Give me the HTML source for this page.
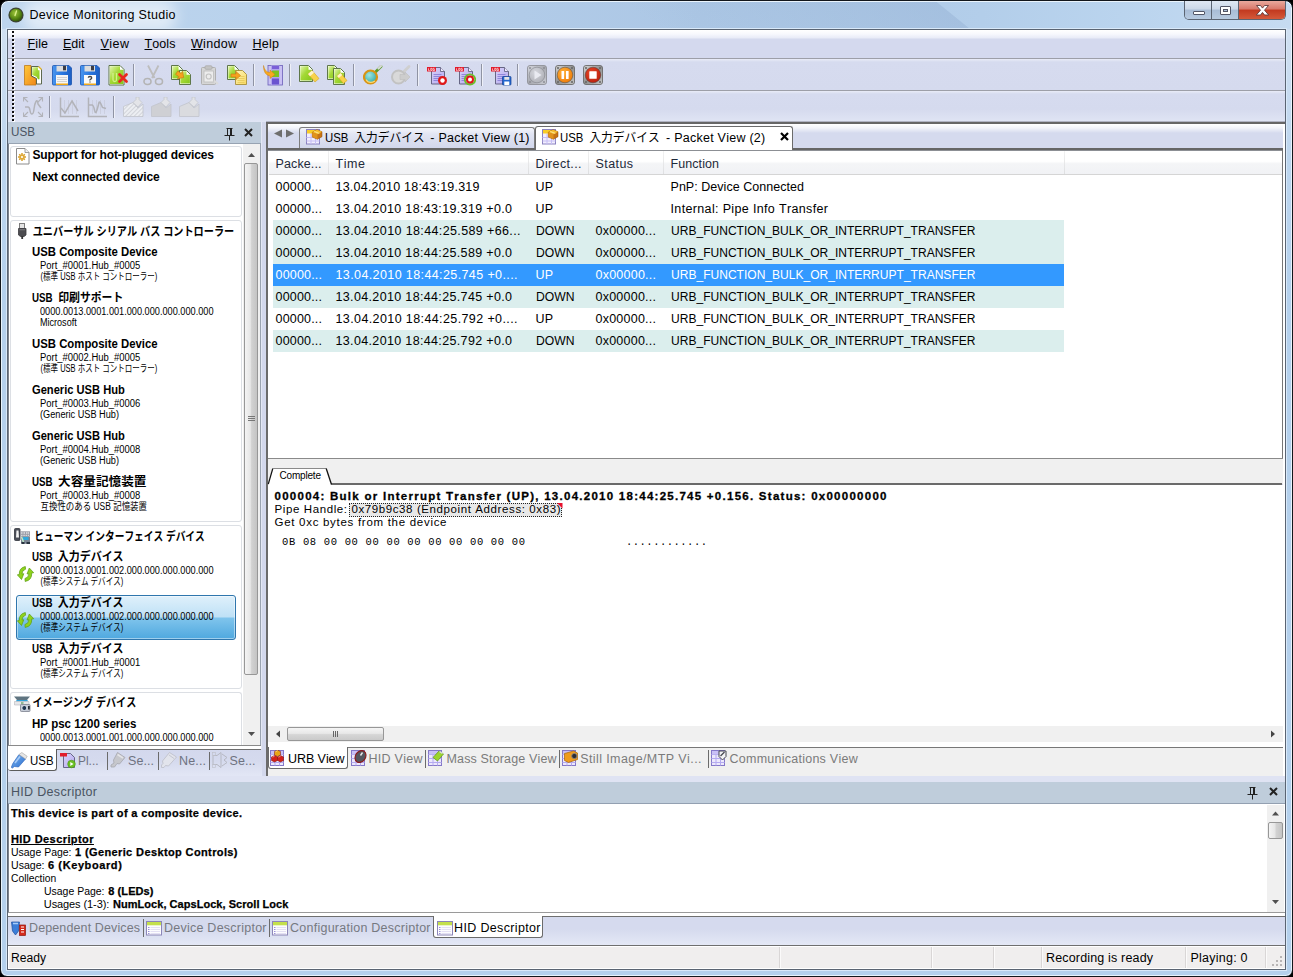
<!DOCTYPE html>
<html><head><meta charset="utf-8"><title>Device Monitoring Studio</title>
<style>
html,body{margin:0;padding:0;}
body{width:1293px;height:977px;position:relative;overflow:hidden;background:#000;font-family:"Liberation Sans",sans-serif;font-kerning:none;}
body div,body span.t,body svg{position:absolute;}
span.t{white-space:pre;}
svg text{font-family:"Liberation Sans","Noto Sans CJK JP",sans-serif;}
#win{left:0;top:0;width:1293px;height:977px;box-sizing:border-box;border:1px solid #12161b;border-radius:8px 8px 7px 7px;background:linear-gradient(#d2e1f2 0px,#cfdff1 40px,#bcd5ee 160px,#b4d0ec 300px,#b4d0ec 100%);box-shadow:inset 0 0 0 1px rgba(236,246,253,.9);}
#glass{left:2px;top:2px;width:1289px;height:27px;border-radius:6px 6px 0 0;overflow:hidden;background:linear-gradient(90deg,#bdd5ee 0px,#b9d2ec 260px,#b1cbe8 520px,#acc7e5 700px,#b3ceea 980px,#bad4ee 1120px,#c6dbf1 1289px);}
#stripe{left:640px;top:-6px;width:312px;height:40px;transform:skewX(51deg);background:linear-gradient(90deg,rgba(150,178,212,0) 0%,rgba(150,178,212,.28) 55%,rgba(146,174,210,.42) 100%);}
#glow{left:34px;top:9px;width:128px;height:10px;border-radius:8px;background:rgba(255,255,255,.55);box-shadow:0 0 14px 12px rgba(255,255,255,.55);}
#capbtn{left:1184px;top:1px;width:102px;height:19px;border:1px solid #5b6472;border-top:none;border-radius:0 0 5px 5px;box-sizing:border-box;overflow:hidden;}
.cb{top:0;height:18px;background:linear-gradient(#dfe8f3 0%,#cbd8e8 45%,#a9bdd6 50%,#b7cae0 100%);border-right:1px solid #5b6472;box-sizing:border-box;}
.cb.cx{background:linear-gradient(#e9a99d 0%,#d8786a 45%,#c2391f 50%,#d4593a 100%);border-right:none;}
</style></head>
<body>
<div id="win"></div>
<div id="glass"><div id="stripe"></div><div id="glow"></div></div>
<div style="left:6px;top:28px;width:1281px;height:943px;border:1px solid #d9e9f9;box-sizing:border-box;"></div>
<div style="left:7px;top:29px;width:1279px;height:941px;border:1px solid #5a6472;box-sizing:border-box;background:#d5daee;"></div>
<svg style="left:8px;top:7px;" width="16" height="16" viewBox="0 0 16 16"><defs><radialGradient id="ig" cx="0.4" cy="0.35" r="0.7"><stop offset="0" stop-color="#9bc23a"/><stop offset="0.6" stop-color="#5a8a14"/><stop offset="1" stop-color="#2f5208"/></radialGradient></defs><circle cx="8" cy="8" r="7.6" fill="#3d4436"/><circle cx="8" cy="8" r="6.3" fill="url(#ig)"/><path d="M8.5 4 L7 8.5" stroke="#d9ef8a" stroke-width="1.4" stroke-linecap="round"/></svg>
<span class="t" style="left:29.5px;top:6.67px;font-size:12.5px;line-height:16px;color:#000;letter-spacing:0.306px;">Device Monitoring Studio</span>
<div id="capbtn"><div class="cb" style="left:0;width:27px"></div><div class="cb" style="left:27px;width:27px"></div><div class="cb cx" style="left:54px;width:47px"></div></div>
<svg style="left:1184px;top:1px;" width="102" height="19" viewBox="0 0 102 19"><rect x="9.5" y="10.5" width="11" height="3" rx="0.5" fill="#fff" stroke="#535666" stroke-width="1"/><rect x="36.500" y="5.5" width="10" height="8" rx="0.5" fill="#fff" stroke="#535666" stroke-width="1"/><rect x="39.5" y="8.5" width="4" height="2" fill="#a9bdd6" stroke="#535666" stroke-width="1"/><path d="M72.500 4.500h4l2 2.600l2-2.600h4l-4 4.700l4.200 4.800h-4.200l-2-2.600l-2 2.600h-4.200l4.200-4.800z" fill="#fff" stroke="#5d3a3a" stroke-width="0.9"/></svg>
<div style="left:8px;top:30px;width:1277px;height:28px;background:linear-gradient(#fff 0px,#f7f8fd 4px,#e8ebf7 8px,#d4d9ee 9px,#d4d9ee 100%);"></div>
<div style="left:8px;top:58px;width:1277px;height:1px;background:#9d9fa8;"></div>
<div style="left:8px;top:59px;width:1277px;height:31px;background:linear-gradient(#e9ecf7 0px,#d6dbef 3px,#d5daee 100%);"></div>
<div style="left:8px;top:90px;width:1277px;height:1px;background:#9d9fa8;"></div>
<div style="left:8px;top:91px;width:1277px;height:31px;background:linear-gradient(#e9ecf7 0px,#d6dbef 3px,#d5daee 18px,#e0e5f4 100%);"></div>
<svg style="left:12px;top:31px;" width="3" height="91" viewBox="0 0 3 91"><rect x="1" y="1" width="2" height="2" fill="#fff"/><rect x="0" y="0" width="2" height="2" fill="#111"/><rect x="1" y="5" width="2" height="2" fill="#fff"/><rect x="0" y="4" width="2" height="2" fill="#111"/><rect x="1" y="9" width="2" height="2" fill="#fff"/><rect x="0" y="8" width="2" height="2" fill="#111"/><rect x="1" y="13" width="2" height="2" fill="#fff"/><rect x="0" y="12" width="2" height="2" fill="#111"/><rect x="1" y="17" width="2" height="2" fill="#fff"/><rect x="0" y="16" width="2" height="2" fill="#111"/><rect x="1" y="21" width="2" height="2" fill="#fff"/><rect x="0" y="20" width="2" height="2" fill="#111"/><rect x="1" y="25" width="2" height="2" fill="#fff"/><rect x="0" y="24" width="2" height="2" fill="#111"/><rect x="1" y="29" width="2" height="2" fill="#fff"/><rect x="0" y="28" width="2" height="2" fill="#111"/><rect x="1" y="33" width="2" height="2" fill="#fff"/><rect x="0" y="32" width="2" height="2" fill="#111"/><rect x="1" y="37" width="2" height="2" fill="#fff"/><rect x="0" y="36" width="2" height="2" fill="#111"/><rect x="1" y="41" width="2" height="2" fill="#fff"/><rect x="0" y="40" width="2" height="2" fill="#111"/><rect x="1" y="45" width="2" height="2" fill="#fff"/><rect x="0" y="44" width="2" height="2" fill="#111"/><rect x="1" y="49" width="2" height="2" fill="#fff"/><rect x="0" y="48" width="2" height="2" fill="#111"/><rect x="1" y="53" width="2" height="2" fill="#fff"/><rect x="0" y="52" width="2" height="2" fill="#111"/><rect x="1" y="57" width="2" height="2" fill="#fff"/><rect x="0" y="56" width="2" height="2" fill="#111"/><rect x="1" y="61" width="2" height="2" fill="#fff"/><rect x="0" y="60" width="2" height="2" fill="#111"/><rect x="1" y="65" width="2" height="2" fill="#fff"/><rect x="0" y="64" width="2" height="2" fill="#111"/><rect x="1" y="69" width="2" height="2" fill="#fff"/><rect x="0" y="68" width="2" height="2" fill="#111"/><rect x="1" y="73" width="2" height="2" fill="#fff"/><rect x="0" y="72" width="2" height="2" fill="#111"/><rect x="1" y="77" width="2" height="2" fill="#fff"/><rect x="0" y="76" width="2" height="2" fill="#111"/><rect x="1" y="81" width="2" height="2" fill="#fff"/><rect x="0" y="80" width="2" height="2" fill="#111"/><rect x="1" y="85" width="2" height="2" fill="#fff"/><rect x="0" y="84" width="2" height="2" fill="#111"/><rect x="1" y="89" width="2" height="2" fill="#fff"/><rect x="0" y="88" width="2" height="2" fill="#111"/></svg>
<span class="t" style="left:27.5px;top:35.67px;font-size:12.5px;line-height:16px;color:#000;letter-spacing:0.119px;"><u>F</u>ile</span>
<span class="t" style="left:63px;top:35.67px;font-size:12.5px;line-height:16px;color:#000;letter-spacing:-0.013px;"><u>E</u>dit</span>
<span class="t" style="left:100.5px;top:35.67px;font-size:12.5px;line-height:16px;color:#000;letter-spacing:0.469px;"><u>V</u>iew</span>
<span class="t" style="left:144.5px;top:35.67px;font-size:12.5px;line-height:16px;color:#000;letter-spacing:0.108px;"><u>T</u>ools</span>
<span class="t" style="left:191px;top:35.67px;font-size:12.5px;line-height:16px;color:#000;letter-spacing:0.308px;"><u>W</u>indow</span>
<span class="t" style="left:252.5px;top:35.67px;font-size:12.5px;line-height:16px;color:#000;letter-spacing:0.264px;"><u>H</u>elp</span>
<svg width="0" height="0" style="left:0;top:0"><defs>
<linearGradient id="gor" x1="0" y1="0" x2="1" y2="1"><stop offset="0" stop-color="#ffc93a"/><stop offset="1" stop-color="#f0861a"/></linearGradient>
<linearGradient id="ggr" x1="0" y1="0" x2="1" y2="1"><stop offset="0" stop-color="#e2f5ae"/><stop offset="0.45" stop-color="#a4d936"/><stop offset="1" stop-color="#84c61c"/></linearGradient>
<linearGradient id="gbl" x1="0" y1="0" x2="1" y2="0"><stop offset="0" stop-color="#4a95ee"/><stop offset="0.5" stop-color="#2a78e0"/><stop offset="1" stop-color="#1d5fc4"/></linearGradient>
<linearGradient id="gye" x1="0" y1="0" x2="1" y2="1"><stop offset="0" stop-color="#fff5b8"/><stop offset="1" stop-color="#f8d860"/></linearGradient>
<linearGradient id="gpu" x1="0" y1="0" x2="1" y2="1"><stop offset="0" stop-color="#d8d2fa"/><stop offset="1" stop-color="#b4a8ee"/></linearGradient>
<linearGradient id="ggy" x1="0" y1="0" x2="0" y2="1"><stop offset="0" stop-color="#e2e2e2"/><stop offset="1" stop-color="#b9b9b9"/></linearGradient>
<linearGradient id="gmt" x1="0" y1="0" x2="1" y2="1"><stop offset="0" stop-color="#d9d9d9"/><stop offset="0.5" stop-color="#8e8e8e"/><stop offset="1" stop-color="#c9c9c9"/></linearGradient>
<radialGradient id="gpl" cx="0.4" cy="0.35" r="0.7"><stop offset="0" stop-color="#d6d6d6"/><stop offset="1" stop-color="#9b9b9b"/></radialGradient>
<radialGradient id="gpa" cx="0.4" cy="0.35" r="0.7"><stop offset="0" stop-color="#ffb23a"/><stop offset="1" stop-color="#ee7a08"/></radialGradient>
<radialGradient id="gst" cx="0.4" cy="0.35" r="0.7"><stop offset="0" stop-color="#e8482a"/><stop offset="1" stop-color="#b81e0c"/></radialGradient>
<radialGradient id="ggl" cx="0.4" cy="0.35" r="0.7"><stop offset="0" stop-color="#9fe6e0"/><stop offset="1" stop-color="#2ba7a5"/></radialGradient>
<linearGradient id="gtb" x1="0" y1="0" x2="1" y2="1"><stop offset="0" stop-color="#7db4ee"/><stop offset="1" stop-color="#2a6fd0"/></linearGradient>
</defs></svg>
<svg style="left:24px;top:65px;" width="21" height="21" viewBox="0 0 21 21"><path d="M0.500 0.500h6.500v10.500l5 2.500v6.500h-11.500z" fill="url(#gor)" stroke="#c07a1a" stroke-width="0.8"/><path d="M7.500 1.500h7l3 3v14.500h-5v-5.500l-5-2.500z" fill="#fff" stroke="#4e5a3c" stroke-width="0.9"/><path d="M8.200 2.300h5.600l0.200 3h1.500v9h-1.500l-1.500-2.500l-4.300-1.800z" fill="url(#ggr)"/><path d="M14.500 1.500l3 3" stroke="#e0b020" stroke-width="1.200"/></svg>
<svg style="left:52px;top:65px;" width="21" height="21" viewBox="0 0 21 21"><path d="M0.500 1.500a1 1 0 0 1 1-1h15.500l2.500 2.500v16a1 1 0 0 1 -1 1h-17a1 1 0 0 1 -1-1z" fill="url(#gbl)" stroke="#1a54b0" stroke-width="0.8"/><rect x="4.500" y="0.800" width="10.500" height="5.700" fill="#dcdcdc"/><rect x="11" y="0.800" width="3" height="4.500" fill="#3c3c44"/><rect x="4" y="10" width="12" height="10" fill="#f6f6f6"/><path d="M5 12.500h10M5 14.500h10M5 16.500h10" stroke="#c9c9c9" stroke-width="0.8"/><rect x="4" y="18.500" width="12" height="1.500" fill="#f0a818"/></svg>
<svg style="left:80px;top:65px;" width="21" height="21" viewBox="0 0 21 21"><path d="M0.500 1.500a1 1 0 0 1 1-1h15.500l2.500 2.500v16a1 1 0 0 1 -1 1h-17a1 1 0 0 1 -1-1z" fill="url(#gbl)" stroke="#1a54b0" stroke-width="0.8"/><rect x="4.500" y="0.800" width="10.500" height="5.700" fill="#dcdcdc"/><rect x="11" y="0.800" width="3" height="4.500" fill="#3c3c44"/><rect x="4" y="10" width="12" height="10" fill="#fbfbfb"/><rect x="4" y="18.500" width="12" height="1.500" fill="#f0a818"/><path d="M8.300 12.800q0-1.300 1.700-1.300t1.700 1.300q0 0.900-1 1.400t-0.700 1.300M10 16.600v1" stroke="#444" stroke-width="1.300" fill="none"/></svg>
<svg style="left:108px;top:65px;" width="21" height="21" viewBox="0 0 21 21"><path d="M1 0.5h11l4 4v15.500h-15z" fill="#fff" stroke="#4e6a34" stroke-width="0.9"/><path d="M1.8 1.3h10.200l0 3.500h3.400v14.300h-13.500z" fill="url(#ggr)"/><path d="M5 8v7q0 1.500 1.700 1.500t1.800-1.500v-7" stroke="#d4f08a" stroke-width="1.300" fill="none"/><path d="M11.500 9.500l7 7M18.500 9.500l-7 7" stroke="#e8281e" stroke-width="2.800" stroke-linecap="round"/></svg>
<div style="left:133px;top:64px;width:1px;height:22px;background:#8f93a3;"></div>
<div style="left:134px;top:64px;width:1px;height:22px;background:#eef0f8;"></div>
<svg style="left:143px;top:65px;" width="21" height="21" viewBox="0 0 21 21"><path d="M5 0.500l6.500 12.500M15.500 0.500l-6.500 12.500" stroke="#bdbdbd" stroke-width="1.800" fill="none"/><ellipse cx="4.500" cy="16.500" rx="3.500" ry="3" fill="none" stroke="#b4b4b4" stroke-width="1.600"/><ellipse cx="16" cy="16.500" rx="3.500" ry="3" fill="none" stroke="#b4b4b4" stroke-width="1.600"/></svg>
<svg style="left:171px;top:65px;" width="21" height="21" viewBox="0 0 21 21"><path d="M0.5 0.5h7l4 4v10h-11z" fill="#fff" stroke="#4e6a34" stroke-width="0.9"/><path d="M1.3 1.3h6.200l0 3.500h3.400v8.800h-9.500z" fill="url(#ggr)"/><path d="M8.5 5.5h7l4 4v10h-11z" fill="#fff" stroke="#4e6a34" stroke-width="0.9"/><path d="M9.3 6.3h6.200l0 3.500h3.400v8.800h-9.500z" fill="url(#ggr)"/><path d="M5 8l4 0v-2.500l4.500 4.500l-4.500 4.500v-2.500h-4z" fill="#f6a21e" stroke="#c97a10" stroke-width="0.600" transform="rotate(35 9 10)"/></svg>
<svg style="left:200px;top:65px;" width="21" height="21" viewBox="0 0 21 21"><rect x="1.500" y="2.500" width="14" height="17" rx="1" fill="#d6d6d6" stroke="#b0b0b0"/><rect x="5" y="0.800" width="7" height="3.500" rx="1" fill="#c4c4c4" stroke="#ababab" stroke-width="0.800"/><rect x="4" y="6" width="9.500" height="11" fill="#ececec" stroke="#bcbcbc" stroke-width="0.8"/><circle cx="8.700" cy="11.500" r="2.500" fill="none" stroke="#c2c2c2" stroke-width="1.200"/><path d="M14 15.500l4 3.500" stroke="#dadada" stroke-width="2"/></svg>
<svg style="left:227px;top:65px;" width="21" height="21" viewBox="0 0 21 21"><path d="M0.5 0.5h7l4 4v10h-11z" fill="#fff" stroke="#4e6a34" stroke-width="0.9"/><path d="M1.3 1.3h6.200l0 3.500h3.400v8.800h-9.500z" fill="url(#ggr)"/><path d="M8.500 5.500h7l4 4v10h-11z" fill="url(#gye)" stroke="#a8903a" stroke-width="0.9"/><path d="M10.500 11.500h7M10.500 13.500h7M10.500 15.500h7M10.500 17.500h7" stroke="#e6c858" stroke-width="0.8"/><path d="M4 9h5v-2.500l4.500 4l-4.500 4v-2.500h-5z" fill="#f6a21e" stroke="#c97a10" stroke-width="0.600"/></svg>
<div style="left:253px;top:64px;width:1px;height:22px;background:#8f93a3;"></div>
<div style="left:254px;top:64px;width:1px;height:22px;background:#eef0f8;"></div>
<svg style="left:263px;top:65px;" width="21" height="21" viewBox="0 0 21 21"><rect x="5" y="0.500" width="14.500" height="19.500" fill="#c9c0f4" stroke="#6a5fb8" stroke-width="0.8"/><rect x="8" y="0.500" width="8.500" height="19.500" fill="#b0a4ec"/><rect x="9" y="1" width="7" height="3" fill="#7a5fd8"/><rect x="9" y="5.500" width="7" height="6.500" fill="#7cc322"/><rect x="9" y="13.500" width="7" height="6" fill="#6a54d0"/><path d="M0.500 0.500q1 6.500 6.500 7v-2.500l5 4.500l-5 4v-2.500q-6.500-1-6.500-10.500z" fill="#f8a820" stroke="#c98010" stroke-width="0.500"/></svg>
<div style="left:289px;top:64px;width:1px;height:22px;background:#8f93a3;"></div>
<div style="left:290px;top:64px;width:1px;height:22px;background:#eef0f8;"></div>
<svg style="left:299px;top:65px;" width="21" height="21" viewBox="0 0 21 21"><path d="M0.5 0.5h9l4 4v12h-13z" fill="#fff" stroke="#4e6a34" stroke-width="0.9"/><path d="M1.3 1.3h8.200l0 3.500h3.400v10.800h-11.500z" fill="url(#ggr)"/><path d="M9 9l4-3.500l7 8l-4 3.500z" fill="#f8d24a" stroke="#d4a420" stroke-width="0.600"/><path d="M9 9l4-3.500l2 2.300l-4 3.500z" fill="#fdf4c8"/></svg>
<svg style="left:327px;top:65px;" width="21" height="21" viewBox="0 0 21 21"><path d="M0.5 0.5h7l4 4v10h-11z" fill="#fff" stroke="#4e6a34" stroke-width="0.9"/><path d="M1.3 1.3h6.200l0 3.500h3.400v8.800h-9.500z" fill="url(#ggr)"/><path d="M6.5 3.5h7l4 4v12h-11z" fill="#fff" stroke="#4e6a34" stroke-width="0.9"/><path d="M7.3 4.3h6.200l0 3.500h3.400v10.800h-9.500z" fill="url(#ggr)"/><path d="M10 11l3.500-3l6.500 7.500l-3.500 3z" fill="#f8d24a" stroke="#d4a420" stroke-width="0.600"/><path d="M10 11l3.500-3l1.800 2l-3.500 3z" fill="#fdf4c8"/></svg>
<div style="left:353px;top:64px;width:1px;height:22px;background:#8f93a3;"></div>
<div style="left:354px;top:64px;width:1px;height:22px;background:#eef0f8;"></div>
<svg style="left:363px;top:65px;" width="21" height="21" viewBox="0 0 21 21"><path d="M12 7.500l6-6" stroke="#5a9a2a" stroke-width="2.800" stroke-linecap="round"/><path d="M15.500 3.500l2.500-2.500" stroke="#d8d8d8" stroke-width="2.200" stroke-linecap="round"/><circle cx="7.500" cy="12" r="6.500" fill="url(#ggl)" stroke="#d89414" stroke-width="2.200"/><path d="M3 14.500q3 5 9 1.500" stroke="#ffd870" stroke-width="1.200" fill="none"/></svg>
<svg style="left:391px;top:65px;" width="21" height="21" viewBox="0 0 21 21"><path d="M12 7.500l6-6" stroke="#cfcfcf" stroke-width="2.800" stroke-linecap="round"/><circle cx="7.500" cy="12" r="6.500" fill="#d9d9d9" stroke="#c2c2c2" stroke-width="2"/><path d="M9 9.500h5v-2.500l5 5l-5 5v-2.500h-5z" fill="#cdcdcd" stroke="#bdbdbd" stroke-width="0.600"/></svg>
<div style="left:417px;top:64px;width:1px;height:22px;background:#8f93a3;"></div>
<div style="left:418px;top:64px;width:1px;height:22px;background:#eef0f8;"></div>
<svg style="left:427px;top:65px;" width="21" height="21" viewBox="0 0 21 21"><path d="M4.500 2.500h9l4 4v12.500h-13z" fill="url(#gpu)" stroke="#5a5a78" stroke-width="0.9"/><path d="M13.500 2.500v4h4" fill="#efeaff" stroke="#5a5a78" stroke-width="0.8"/><path d="M6.500 9.500h8M6.500 11.500h8M6.500 13.500h6M6.500 15.500h5" stroke="#8a7fd8" stroke-width="0.9"/><rect x="0" y="2" width="9" height="4.500" fill="#e21b2c"/><path d="M1.500 3.300v2.200h1.200M3.700 3.300h1.300v2.200h-1.300zM6 3.300h1.500M6 3.300v2.200h1.600v-1h-0.800" stroke="#fff" stroke-width="0.600" fill="none"/><circle cx="15.500" cy="15.500" r="4.500" fill="#e01818"/><circle cx="15.500" cy="15.500" r="2.200" fill="#fff"/></svg>
<svg style="left:455px;top:65px;" width="21" height="21" viewBox="0 0 21 21"><path d="M4.500 2.500h9l4 4v12.500h-13z" fill="url(#gpu)" stroke="#5a5a78" stroke-width="0.9"/><path d="M13.500 2.500v4h4" fill="#efeaff" stroke="#5a5a78" stroke-width="0.8"/><path d="M6.500 9.500h8M6.500 11.500h8M6.500 13.500h6M6.500 15.500h5" stroke="#8a7fd8" stroke-width="0.9"/><rect x="0" y="2" width="9" height="4.500" fill="#e21b2c"/><path d="M1.500 3.300v2.200h1.200M3.700 3.300h1.300v2.200h-1.300zM6 3.300h1.500M6 3.300v2.200h1.600v-1h-0.800" stroke="#fff" stroke-width="0.600" fill="none"/><circle cx="15" cy="14.500" r="5.200" fill="none" stroke="#6cc02a" stroke-width="1.800"/><circle cx="15" cy="14.500" r="4" fill="#e01818"/><circle cx="15" cy="14.500" r="2" fill="#fff"/></svg>
<div style="left:481px;top:64px;width:1px;height:22px;background:#8f93a3;"></div>
<div style="left:482px;top:64px;width:1px;height:22px;background:#eef0f8;"></div>
<svg style="left:491px;top:65px;" width="21" height="21" viewBox="0 0 21 21"><path d="M4.500 2.500h9l4 4v12.500h-13z" fill="url(#gpu)" stroke="#5a5a78" stroke-width="0.9"/><path d="M13.500 2.500v4h4" fill="#efeaff" stroke="#5a5a78" stroke-width="0.8"/><path d="M6.500 9.500h8M6.500 11.500h8M6.500 13.500h6M6.500 15.500h5" stroke="#8a7fd8" stroke-width="0.9"/><rect x="0" y="2" width="9" height="4.500" fill="#e21b2c"/><path d="M1.500 3.300v2.200h1.200M3.700 3.300h1.300v2.200h-1.300zM6 3.300h1.500M6 3.300v2.200h1.600v-1h-0.800" stroke="#fff" stroke-width="0.600" fill="none"/><rect x="11.500" y="11.500" width="8.500" height="8.500" rx="0.800" fill="#2468d0" stroke="#123f92" stroke-width="0.700"/><rect x="13.300" y="12" width="5" height="2.800" fill="#e4e4e4"/><rect x="13.300" y="16.500" width="5" height="3.500" fill="#fff"/></svg>
<div style="left:517px;top:64px;width:1px;height:22px;background:#8f93a3;"></div>
<div style="left:518px;top:64px;width:1px;height:22px;background:#eef0f8;"></div>
<svg style="left:527px;top:65px;" width="21" height="21" viewBox="0 0 21 21"><g opacity="0.65"><rect x="0.500" y="0.500" width="19" height="19" rx="2.500" fill="url(#gmt)" stroke="#6a6a6a" stroke-width="0.9"/><circle cx="3" cy="3" r="1" fill="#666"/><circle cx="17" cy="3" r="1" fill="#666"/><circle cx="3" cy="17" r="1" fill="#666"/><circle cx="17" cy="17" r="1" fill="#666"/><circle cx="10" cy="10" r="7.800" fill="url(#gpl)" stroke="rgba(60,60,60,.55)" stroke-width="0.800"/><path d="M7.500 5.500l7 4.500l-7 4.500z" fill="#f4f4f4"/></g></svg>
<svg style="left:555px;top:65px;" width="21" height="21" viewBox="0 0 21 21"><rect x="0.500" y="0.500" width="19" height="19" rx="2.500" fill="url(#gmt)" stroke="#6a6a6a" stroke-width="0.9"/><circle cx="3" cy="3" r="1" fill="#666"/><circle cx="17" cy="3" r="1" fill="#666"/><circle cx="3" cy="17" r="1" fill="#666"/><circle cx="17" cy="17" r="1" fill="#666"/><circle cx="10" cy="10" r="7.800" fill="url(#gpa)" stroke="rgba(60,60,60,.55)" stroke-width="0.800"/><rect x="6.500" y="6" width="2.600" height="8" fill="#fff"/><rect x="11" y="6" width="2.600" height="8" fill="#fff"/></svg>
<svg style="left:583px;top:65px;" width="21" height="21" viewBox="0 0 21 21"><rect x="0.500" y="0.500" width="19" height="19" rx="2.500" fill="url(#gmt)" stroke="#6a6a6a" stroke-width="0.9"/><circle cx="3" cy="3" r="1" fill="#666"/><circle cx="17" cy="3" r="1" fill="#666"/><circle cx="3" cy="17" r="1" fill="#666"/><circle cx="17" cy="17" r="1" fill="#666"/><circle cx="10" cy="10" r="7.800" fill="url(#gst)" stroke="rgba(60,60,60,.55)" stroke-width="0.800"/><rect x="6.300" y="6.300" width="7.400" height="7.400" rx="0.500" fill="#fff"/></svg>
<svg style="left:23px;top:97px;" width="21" height="21" viewBox="0 0 21 21"><g fill="none" stroke="#b2b3b9" stroke-width="1.100"><path d="M0.500 4.500v-4h4M1 1l4 4M19.500 4.500v-4h-4M19 1l-4 4M0.500 15.500v4h4M1 19l4-4M19.500 15.500v4h-4M19 19l-4-4"/><path d="M2 10h3q1.500 0 2 3.500t2 3.500t2-5t2-7.500t2 2.500l3 4" stroke-width="1.500"/></g></svg>
<div style="left:49px;top:96px;width:1px;height:22px;background:#8f93a3;"></div>
<div style="left:50px;top:96px;width:1px;height:22px;background:#eef0f8;"></div>
<svg style="left:59px;top:97px;" width="21" height="21" viewBox="0 0 21 21"><g fill="none" stroke="#b2b3b9"><path d="M1.500 0.500v19h18.500" stroke-width="1.500"/><path d="M2 11l4 5l7-12l6 10" stroke-width="1.500"/><path d="M5.500 3v14M9.500 3v14M13.500 3v14M17.500 3v14" stroke-width="0.500" opacity="0.600"/></g></svg>
<svg style="left:87px;top:97px;" width="21" height="21" viewBox="0 0 21 21"><g fill="none" stroke="#b2b3b9"><path d="M1.500 0.500v19h18.500" stroke-width="1.500"/><path d="M2 8h3q1.500 0 2.500 5t2.500 0t2-7.500t3.500 5l3.500 1" stroke-width="1.500"/><path d="M5.500 3v14M9.500 3v14M13.500 3v14M17.500 3v14" stroke-width="0.500" opacity="0.600"/></g></svg>
<div style="left:113px;top:96px;width:1px;height:22px;background:#8f93a3;"></div>
<div style="left:114px;top:96px;width:1px;height:22px;background:#eef0f8;"></div>
<svg style="left:123px;top:97px;" width="21" height="21" viewBox="0 0 21 21"><defs><pattern id="hat" width="3" height="3" patternUnits="userSpaceOnUse" patternTransform="rotate(45)"><rect width="3" height="3" fill="#eceef2"/><rect width="1" height="3" fill="#d2d4da"/></pattern></defs><path d="M0.500 9.500l9.500-4l5 5.500l5-4v12.500h-19.500z" fill="url(#hat)" stroke="#c2c4cb" stroke-width="0.8"/><path d="M10 5.500l3-3v-2.500h3v2.500l3 3l-4 4.500z" fill="#e3e4e8" stroke="#c4c6cc" stroke-width="0.8"/></svg>
<svg style="left:151px;top:97px;" width="21" height="21" viewBox="0 0 21 21"><path d="M0.500 9.500l9.500-4l5 5.500l5-4v12.500h-19.500z" fill="#cfd0d4" stroke="#c2c4cb" stroke-width="0.8"/><path d="M10 5.500l3-3v-2.500h3v2.500l3 3l-4 4.500z" fill="#e3e4e8" stroke="#c4c6cc" stroke-width="0.8"/></svg>
<svg style="left:179px;top:97px;" width="21" height="21" viewBox="0 0 21 21"><path d="M0.500 9.500l9.500-4l5 5.500l5-4v12.500h-19.500z" fill="#dadbdf" stroke="#c2c4cb" stroke-width="0.8"/><path d="M10 5.500l3-3v-2.500h3v2.500l3 3l-4 4.500z" fill="#e3e4e8" stroke="#c4c6cc" stroke-width="0.8"/></svg>
<div style="left:8px;top:122px;width:254px;height:22px;background:#bfcddb;"></div>
<span class="t" style="left:11px;top:123.67px;font-size:12.5px;line-height:16px;color:#4a5462;transform:scaleX(0.9338);transform-origin:0 0;">USB</span>
<svg style="left:222px;top:125px;" width="32" height="16" viewBox="0 0 32 16"><path d="M4.500 3.500h6M5.500 3.500v6.500M9.500 3.500v6.500M8.500 3.500v6.500M2.500 10.500h10M7.500 10.500v5" stroke="#222" stroke-width="1" fill="none"/><path d="M23 4l7 7M30 4l-7 7" stroke="#222" stroke-width="2" fill="none"/></svg>
<div style="left:8px;top:143px;width:253px;height:1px;background:#97a3b2;"></div>
<div style="left:8px;top:144px;width:1px;height:601px;background:#7d838c;"></div>
<div style="left:9px;top:144px;width:234px;height:601px;background:#fff;"></div>
<div style="left:243px;top:144px;width:17px;height:601px;background:#f0f0f0;"></div>
<div style="left:244px;top:163px;width:14px;height:512px;background:linear-gradient(90deg,#f4f4f4 0%,#e6e6e6 45%,#d2d2d2 55%,#c4c4c4 100%);border:1px solid #979797;box-sizing:border-box;border-radius:2px;"></div>
<svg style="left:243px;top:144px;" width="17" height="601" viewBox="0 0 17 601"><path d="M5 13l3.500-4l3.500 4z" fill="#505050"/><path d="M5 588l3.500 4l3.500-4z" fill="#505050"/><path d="M5 272.500h7M5 274.500h7M5 276.500h7" stroke="#777" stroke-width="1"/></svg>
<div style="left:260px;top:144px;width:1px;height:601px;background:#9aa3b0;"></div>
<div style="left:261px;top:122px;width:1px;height:654px;background:#e3e7f4;"></div>
<div style="left:10px;top:146px;width:232px;height:71px;border:1px solid #dcdfe4;border-radius:3px;box-sizing:border-box;"></div>
<div style="left:10px;top:220px;width:232px;height:302px;border:1px solid #dcdfe4;border-radius:3px;box-sizing:border-box;"></div>
<div style="left:10px;top:525px;width:232px;height:164px;border:1px solid #dcdfe4;border-radius:3px;box-sizing:border-box;"></div>
<div style="left:10px;top:692px;width:232px;height:53px;border:1px solid #dcdfe4;border-radius:3px;box-sizing:border-box;border-bottom:none;border-radius:3px 3px 0 0;"></div>
<span class="t" style="left:32.4px;top:146.84px;font-size:12px;line-height:16px;color:#000;letter-spacing:-0.124px;font-weight:bold;">Support for hot-plugged devices</span>
<span class="t" style="left:32.4px;top:168.84px;font-size:12px;line-height:16px;color:#000;letter-spacing:-0.137px;font-weight:bold;">Next connected device</span>
<svg style="left:31px;top:221px;" width="207" height="20" viewBox="0 0 207 20"><text x="1.7" y="15" font-size="12" font-weight="bold" fill="#000" textLength="201.600" lengthAdjust="spacingAndGlyphs">ユニバーサル シリアル バス コントローラー</text></svg>
<span class="t" style="left:32.4px;top:243.84px;font-size:12px;line-height:16px;color:#000;font-weight:bold;transform:scaleX(0.9465);transform-origin:0 0;">USB Composite Device</span>
<span class="t" style="left:39.8px;top:259.04px;font-size:10px;line-height:13px;color:#000;transform:scaleX(0.9444);transform-origin:0 0;">Port_#0001.Hub_#0005</span>
<svg style="left:39px;top:268.3px;" width="122" height="15" viewBox="0 0 122 15"><text x="1.6" y="12" font-size="10" fill="#000" textLength="116.700" lengthAdjust="spacingAndGlyphs">(標準 USB ホスト コントローラー)</text></svg>
<span class="t" style="left:32.4px;top:289.84px;font-size:12px;line-height:16px;color:#000;font-weight:bold;transform:scaleX(0.8131);transform-origin:0 0;">USB</span>
<svg style="left:55.5px;top:288px;" width="71" height="19" viewBox="0 0 71 19"><text x="2.200" y="14" font-size="12" font-weight="bold" fill="#000" textLength="65.100" lengthAdjust="spacingAndGlyphs">印刷サポート</text></svg>
<span class="t" style="left:39.8px;top:305.04px;font-size:10px;line-height:13px;color:#000;transform:scaleX(0.9176);transform-origin:0 0;">0000.0013.0001.001.000.000.000.000.000</span>
<span class="t" style="left:39.8px;top:316.04px;font-size:10px;line-height:13px;color:#000;transform:scaleX(0.9048);transform-origin:0 0;">Microsoft</span>
<span class="t" style="left:32.4px;top:335.84px;font-size:12px;line-height:16px;color:#000;font-weight:bold;transform:scaleX(0.9465);transform-origin:0 0;">USB Composite Device</span>
<span class="t" style="left:39.8px;top:351.04px;font-size:10px;line-height:13px;color:#000;transform:scaleX(0.9444);transform-origin:0 0;">Port_#0002.Hub_#0005</span>
<svg style="left:39px;top:360.3px;" width="122" height="15" viewBox="0 0 122 15"><text x="1.6" y="12" font-size="10" fill="#000" textLength="116.700" lengthAdjust="spacingAndGlyphs">(標準 USB ホスト コントローラー)</text></svg>
<span class="t" style="left:32.4px;top:381.84px;font-size:12px;line-height:16px;color:#000;font-weight:bold;transform:scaleX(0.9278);transform-origin:0 0;">Generic USB Hub</span>
<span class="t" style="left:39.8px;top:397.04px;font-size:10px;line-height:13px;color:#000;transform:scaleX(0.9444);transform-origin:0 0;">Port_#0003.Hub_#0006</span>
<span class="t" style="left:39.8px;top:408.04px;font-size:10px;line-height:13px;color:#000;transform:scaleX(0.9171);transform-origin:0 0;">(Generic USB Hub)</span>
<span class="t" style="left:32.4px;top:427.84px;font-size:12px;line-height:16px;color:#000;font-weight:bold;transform:scaleX(0.9278);transform-origin:0 0;">Generic USB Hub</span>
<span class="t" style="left:39.8px;top:443.04px;font-size:10px;line-height:13px;color:#000;transform:scaleX(0.9444);transform-origin:0 0;">Port_#0004.Hub_#0008</span>
<span class="t" style="left:39.8px;top:454.04px;font-size:10px;line-height:13px;color:#000;transform:scaleX(0.9171);transform-origin:0 0;">(Generic USB Hub)</span>
<span class="t" style="left:32.4px;top:473.84px;font-size:12px;line-height:16px;color:#000;font-weight:bold;transform:scaleX(0.8131);transform-origin:0 0;">USB</span>
<svg style="left:55.5px;top:472px;" width="94" height="19" viewBox="0 0 94 19"><text x="2" y="14" font-size="12" font-weight="bold" fill="#000" textLength="88.400" lengthAdjust="spacingAndGlyphs">大容量記憶装置</text></svg>
<span class="t" style="left:39.8px;top:489.04px;font-size:10px;line-height:13px;color:#000;transform:scaleX(0.9444);transform-origin:0 0;">Port_#0003.Hub_#0008</span>
<svg style="left:39px;top:498.3px;" width="111" height="15" viewBox="0 0 111 15"><text x="1.5" y="12" font-size="10" fill="#000" textLength="106.500" lengthAdjust="spacingAndGlyphs">互換性のある USB 記憶装置</text></svg>
<svg style="left:31.5px;top:526px;" width="176" height="20" viewBox="0 0 176 20"><text x="2.300" y="15" font-size="12" font-weight="bold" fill="#000" textLength="170.500" lengthAdjust="spacingAndGlyphs">ヒューマン インターフェイス デバイス</text></svg>
<div style="left:16px;top:595px;width:220px;height:45px;background:linear-gradient(#dff0fb 0%,#bfe1f6 48%,#7fc4ec 52%,#4fa8df 100%);border:1px solid #2f76ad;border-radius:3px;box-sizing:border-box;box-shadow:inset 0 0 0 1px rgba(255,255,255,.45);"></div>
<span class="t" style="left:32.4px;top:548.84px;font-size:12px;line-height:16px;color:#000;font-weight:bold;transform:scaleX(0.8131);transform-origin:0 0;">USB</span>
<svg style="left:55.5px;top:547px;" width="71" height="19" viewBox="0 0 71 19"><text x="1.8" y="14" font-size="12" font-weight="bold" fill="#000" textLength="65.800" lengthAdjust="spacingAndGlyphs">入力デバイス</text></svg>
<span class="t" style="left:39.8px;top:564.03px;font-size:10px;line-height:13px;color:#000;transform:scaleX(0.9176);transform-origin:0 0;">0000.0013.0001.002.000.000.000.000.000</span>
<svg style="left:39px;top:573.3px;" width="88" height="15" viewBox="0 0 88 15"><text x="1.6" y="12" font-size="10" fill="#000" textLength="82.700" lengthAdjust="spacingAndGlyphs">(標準システム デバイス)</text></svg>
<span class="t" style="left:32.4px;top:594.84px;font-size:12px;line-height:16px;color:#000;font-weight:bold;transform:scaleX(0.8131);transform-origin:0 0;">USB</span>
<svg style="left:55.5px;top:593px;" width="71" height="19" viewBox="0 0 71 19"><text x="1.8" y="14" font-size="12" font-weight="bold" fill="#000" textLength="65.800" lengthAdjust="spacingAndGlyphs">入力デバイス</text></svg>
<span class="t" style="left:39.8px;top:610.03px;font-size:10px;line-height:13px;color:#000;transform:scaleX(0.9176);transform-origin:0 0;">0000.0013.0001.002.000.000.000.000.000</span>
<svg style="left:39px;top:619.3px;" width="88" height="15" viewBox="0 0 88 15"><text x="1.6" y="12" font-size="10" fill="#000" textLength="82.700" lengthAdjust="spacingAndGlyphs">(標準システム デバイス)</text></svg>
<span class="t" style="left:32.4px;top:640.84px;font-size:12px;line-height:16px;color:#000;font-weight:bold;transform:scaleX(0.8131);transform-origin:0 0;">USB</span>
<svg style="left:55.5px;top:639px;" width="71" height="19" viewBox="0 0 71 19"><text x="1.8" y="14" font-size="12" font-weight="bold" fill="#000" textLength="65.800" lengthAdjust="spacingAndGlyphs">入力デバイス</text></svg>
<span class="t" style="left:39.8px;top:656.03px;font-size:10px;line-height:13px;color:#000;transform:scaleX(0.9444);transform-origin:0 0;">Port_#0001.Hub_#0001</span>
<svg style="left:39px;top:665.3px;" width="88" height="15" viewBox="0 0 88 15"><text x="1.6" y="12" font-size="10" fill="#000" textLength="82.700" lengthAdjust="spacingAndGlyphs">(標準システム デバイス)</text></svg>
<svg style="left:31px;top:692px;" width="109" height="20" viewBox="0 0 109 20"><text x="1.5" y="15" font-size="12" font-weight="bold" fill="#000" textLength="103.800" lengthAdjust="spacingAndGlyphs">イメージング デバイス</text></svg>
<span class="t" style="left:32.4px;top:715.84px;font-size:12px;line-height:16px;color:#000;font-weight:bold;transform:scaleX(0.9591);transform-origin:0 0;">HP psc 1200 series</span>
<span class="t" style="left:39.8px;top:731.03px;font-size:10px;line-height:13px;color:#000;transform:scaleX(0.9176);transform-origin:0 0;">0000.0013.0001.001.000.000.000.000.000</span>
<svg style="left:16px;top:148px;" width="14" height="17" viewBox="0 0 14 17"><path d="M0.500 0.500h8.500l4 4v11.500h-12.500z" fill="#fff" stroke="#8c8c8c" stroke-width="1"/><path d="M9 0.500v4h4" fill="#f1f1f1" stroke="#8c8c8c" stroke-width="0.800"/><g stroke="#d8a02c" stroke-width="1.500"><path d="M6 5v8M2 9h8M3.200 6.200l5.600 5.600M8.800 6.200l-5.600 5.600"/></g><circle cx="6" cy="9" r="2.600" fill="#e0aa38"/><circle cx="6" cy="9" r="1.100" fill="#fff"/></svg>
<svg style="left:18px;top:223px;" width="9" height="17" viewBox="0 0 9 17"><rect x="1.500" y="0.500" width="5" height="5" fill="#e4e4e4" stroke="#7c7c7c" stroke-width="1"/><path d="M0.500 5.500h7.500v6.500l-2 1.500h-3.500l-2-1.500z" fill="#4c4c50" stroke="#3a3a3e" stroke-width="0.800"/><rect x="3.300" y="13" width="1.800" height="3" fill="#333"/><path d="M1.500 6.800h5.500" stroke="#8a8a8e" stroke-width="0.800"/></svg>
<svg style="left:14px;top:528px;" width="17" height="17" viewBox="0 0 17 17"><rect x="0.500" y="0.500" width="5.500" height="12" rx="1" fill="#4a4e58" stroke="#33363e" stroke-width="0.800"/><path d="M2.500 2.500h2l0.500 7h-3z" fill="#f4f4f4"/><rect x="6" y="3.300" width="10" height="5" fill="#9a9ca6"/><path d="M7 5h1.500M9.500 5h1.500M12 5h1.500M14 5h1" stroke="#fff" stroke-width="1.200"/><path d="M7 7.300h8" stroke="#e8e8e8" stroke-width="1" stroke-dasharray="1.500 0.800"/><rect x="7" y="8.300" width="9" height="7.500" rx="1" fill="#7a8492"/><rect x="9" y="9" width="5.500" height="3" fill="#32a8dc"/><path d="M7.500 9l2 5" stroke="#bfeccb" stroke-width="1.500"/><rect x="7.500" y="14" width="3" height="2" fill="#2a3440"/><rect x="12.500" y="14" width="3.500" height="2" fill="#2a3440"/></svg>
<svg style="left:14px;top:695.5px;" width="17" height="17" viewBox="0 0 17 17"><path d="M0 0.500h16l-3 3.500h-10z" fill="#5f7480"/><path d="M2.500 4h11l0.500 1.500h-12z" fill="#2fa0d8"/><path d="M0.500 5.500h14.500v3.500h-14.500z" fill="#e6e7ea" stroke="#b5b7bc" stroke-width="0.600"/><rect x="7" y="6.500" width="2.500" height="1" fill="#3a8a3a"/><rect x="6.500" y="8.500" width="9.500" height="7" rx="0.800" fill="#c2c7d2" stroke="#7c828e" stroke-width="0.800"/><circle cx="10.300" cy="12" r="2.500" fill="#1e3450" stroke="#e8ecf4" stroke-width="0.900"/><rect x="14" y="10" width="1.800" height="3.500" fill="#2a2e38"/></svg>
<svg style="left:16.5px;top:565.5px;" width="17" height="17" viewBox="0 0 17 17"><g fill="#8ed21c" stroke="#5c9c12" stroke-width="0.700" stroke-linejoin="round"><path d="M8.300 0.500q-6.500 1.500-6 8l-2 0.300l4.200 4.700l2.300-5.800l-1.800 0.300q0-3.800 3.600-4.800z"/><path d="M8.200 15.500q7-1.500 6.500-8.500l2-0.300l-4.400-4.700l-2.300 6l1.900-0.400q0 3.800-4 5z"/></g></svg>
<svg style="left:16.5px;top:611.5px;" width="17" height="17" viewBox="0 0 17 17"><g fill="#8ed21c" stroke="#5c9c12" stroke-width="0.700" stroke-linejoin="round"><path d="M8.300 0.500q-6.500 1.500-6 8l-2 0.300l4.200 4.700l2.300-5.800l-1.800 0.300q0-3.800 3.600-4.800z"/><path d="M8.200 15.500q7-1.500 6.500-8.500l2-0.300l-4.400-4.700l-2.300 6l1.900-0.400q0 3.800-4 5z"/></g></svg>
<div style="left:8px;top:745px;width:253px;height:1px;background:#8a8a8a;"></div>
<div style="left:8px;top:746px;width:253px;height:3px;background:#fff;"></div>
<div style="left:8px;top:749px;width:254px;height:27px;background:linear-gradient(#d3d8ed 0px,#d5daee 12px,#e2e6f5 26px);"></div>
<div style="left:56px;top:749px;width:205px;height:1px;background:#6e6e6e;"></div>
<div style="left:8px;top:749px;width:49px;height:22px;background:#fff;border:1px solid #5c5c5c;border-top:none;border-left:none;border-radius:0 0 3px 3px;box-sizing:border-box;"></div>
<div style="left:8px;top:746px;width:48px;height:4px;background:#fff;"></div>
<svg style="left:11px;top:752px;" width="17" height="17" viewBox="0 0 17 17"><path d="M1.800 11.500L8 2.500L14.500 7L7.500 15L3.500 14.500L1 16.200L0.300 15.300z" fill="url(#gtb)" stroke="#2a62b8" stroke-width="0.600"/><path d="M8 2.500L10.800 0.500L16.200 4.300L14.500 7z" fill="#e6e6e6" stroke="#a4a4a4" stroke-width="0.600"/><path d="M4 11l5-6.500" stroke="#a8ccf6" stroke-width="1.600"/></svg>
<span class="t" style="left:29.5px;top:752.67px;font-size:12.5px;line-height:16px;color:#000;transform:scaleX(0.9143);transform-origin:0 0;">USB</span>
<svg style="left:59.5px;top:752px;" width="17" height="17" viewBox="0 0 17 17"><path d="M3.500 1.500h7l4 4v10h-11z" fill="url(#gpu)" stroke="#5a5a78" stroke-width="0.900"/><rect x="0" y="1" width="7" height="3.500" fill="#e21b2c"/><circle cx="11.500" cy="12" r="3.800" fill="#6cc024" stroke="#4a9612" stroke-width="0.600"/><path d="M10.300 10l3.200 2l-3.200 2z" fill="#fff"/></svg>
<span class="t" style="left:77.5px;top:752.67px;font-size:12.5px;line-height:16px;color:#6e7280;transform:scaleX(0.9520);transform-origin:0 0;">Pl...</span>
<div style="left:107px;top:752px;width:1px;height:18px;background:#6b6b6b;"></div>
<svg style="left:110px;top:752px;" width="17" height="17" viewBox="0 0 17 17"><path d="M7.500 0.500l7.500 5l-5.500 6.500l-2.500-0.500l-2.500 3.500h-3.500v-2l3-2l-0.500-3z" fill="#c6c7cc" stroke="#a6a7ae" stroke-width="0.800"/><path d="M7.500 2.500l5.500 3.500" stroke="#e4e4e8" stroke-width="1.500"/></svg>
<span class="t" style="left:128px;top:752.67px;font-size:12.5px;line-height:16px;color:#6e7280;letter-spacing:0.073px;">Se...</span>
<div style="left:158px;top:752px;width:1px;height:18px;background:#6b6b6b;"></div>
<svg style="left:161px;top:752px;" width="17" height="17" viewBox="0 0 17 17"><path d="M8.500 0.500l7 4.500l-8 9l-3-0.500l-1.500 2h-2.500v-2.500l1.500-1.500l-0.500-2.500z" fill="#e2e4ec" stroke="#bcbec8" stroke-width="0.800"/><path d="M8 3l5 3.500" stroke="#c4c6d0"/></svg>
<span class="t" style="left:179px;top:752.67px;font-size:12.5px;line-height:16px;color:#6e7280;letter-spacing:0.151px;">Ne...</span>
<div style="left:209px;top:752px;width:1px;height:18px;background:#6b6b6b;"></div>
<svg style="left:212px;top:752px;" width="17" height="17" viewBox="0 0 17 17"><path d="M1 3.500h4l4-3v15l-4-3h-4z" fill="none" stroke="#b6b8c2" stroke-width="1"/><path d="M10 2l5 3.500l-3 2.500l3 2.500l-5 3.500" fill="none" stroke="#b6b8c2" stroke-width="1"/><rect x="0.500" y="0.500" width="3" height="3" fill="none" stroke="#c0c2cc" stroke-width="0.700"/><rect x="0.500" y="12.500" width="3" height="3" fill="none" stroke="#c0c2cc" stroke-width="0.700"/></svg>
<span class="t" style="left:229.5px;top:752.67px;font-size:12.5px;line-height:16px;color:#6e7280;letter-spacing:0.073px;">Se...</span>
<div style="left:262px;top:122px;width:4px;height:654px;background:#d3d8ec;"></div>
<div style="left:266px;top:121px;width:1019px;height:1px;background:#b0b3c2;"></div>
<div style="left:266px;top:122px;width:1019px;height:2px;background:#666;"></div>
<div style="left:268px;top:124px;width:1015px;height:24px;background:linear-gradient(#fff 0px,#f2f4fa 4px,#d5daee 9px,#d5daee 100%);"></div>
<div style="left:266px;top:148px;width:1018px;height:2px;background:#666;"></div>
<div style="left:266px;top:124px;width:2px;height:652px;background:#6b6b6b;"></div>
<div style="left:268px;top:150px;width:1015px;height:309px;background:#fff;"></div>
<div style="left:1282px;top:150px;width:1px;height:309px;background:#777;"></div>
<div style="left:1283px;top:124px;width:2px;height:652px;background:#fff;"></div>
<svg style="left:272px;top:128px;" width="26" height="12" viewBox="0 0 26 12"><path d="M10 1.500v8l-8-4z" fill="#6e6e6e"/><path d="M14 1.500v8l8-4z" fill="#6e6e6e"/></svg>
<div style="left:299px;top:127px;width:236px;height:21px;background:linear-gradient(#f4f5fb 0px,#e2e5f3 6px,#d2d7ec 100%);border:1px solid #7d7d7d;border-bottom:none;border-radius:3px 3px 0 0;box-sizing:border-box;"></div>
<div style="left:535px;top:126px;width:258px;height:24px;background:#fff;border:1px solid #6b6b6b;border-bottom:none;border-radius:3px 3px 0 0;box-sizing:border-box;"></div>
<svg style="left:306.3px;top:129px;" width="17" height="17" viewBox="0 0 17 17"><rect x="0.500" y="0.500" width="13" height="14.500" fill="#f2eefe" stroke="#8a82c0" stroke-width="1"/><path d="M0.500 8.500h13M0.500 12h13M5 4.500v10.500M9.500 4.500v10.500" stroke="#c6bef4" stroke-width="1"/><rect x="1" y="1" width="12" height="3.500" fill="#f8cc28"/><path d="M6.300 3.300l4.700-2.600l5 2v5l-4.500 2.600l-5.200-2.200z" fill="#c87414" stroke="#8a4a0a" stroke-width="0.500"/><path d="M6.300 3.300l4.700-2.600l5 2l-4.500 2.500z" fill="#f6be30"/><path d="M6.300 3.300l5.200 1.900v5.100l-5.200-2.200z" fill="#e0921c"/><path d="M8.300 2.500l5 1.900" stroke="#fdeaa0" stroke-width="0.900"/></svg>
<span class="t" style="left:324.6px;top:129.67px;font-size:12.5px;line-height:16px;color:#000;transform:scaleX(0.9104);transform-origin:0 0;">USB</span>
<svg style="left:352.6px;top:128px;" width="75" height="19" viewBox="0 0 75 19"><text x="1.400" y="14" font-size="12.500" fill="#000" textLength="70.200" lengthAdjust="spacingAndGlyphs">入力デバイス</text></svg>
<span class="t" style="left:430.3px;top:129.67px;font-size:12.5px;line-height:16px;color:#000;letter-spacing:0.252px;">- Packet View (1)</span>
<svg style="left:542px;top:129px;" width="17" height="17" viewBox="0 0 17 17"><rect x="0.500" y="0.500" width="13" height="14.500" fill="#f2eefe" stroke="#8a82c0" stroke-width="1"/><path d="M0.500 8.500h13M0.500 12h13M5 4.500v10.500M9.500 4.500v10.500" stroke="#c6bef4" stroke-width="1"/><rect x="1" y="1" width="12" height="3.500" fill="#f8cc28"/><path d="M6.300 3.300l4.700-2.600l5 2v5l-4.500 2.600l-5.200-2.200z" fill="#c87414" stroke="#8a4a0a" stroke-width="0.500"/><path d="M6.300 3.300l4.700-2.600l5 2l-4.500 2.500z" fill="#f6be30"/><path d="M6.300 3.300l5.200 1.900v5.100l-5.200-2.200z" fill="#e0921c"/><path d="M8.300 2.500l5 1.900" stroke="#fdeaa0" stroke-width="0.900"/></svg>
<span class="t" style="left:560.3px;top:129.67px;font-size:12.5px;line-height:16px;color:#000;transform:scaleX(0.9104);transform-origin:0 0;">USB</span>
<svg style="left:588.3px;top:128px;" width="75" height="19" viewBox="0 0 75 19"><text x="1.400" y="14" font-size="12.500" fill="#000" textLength="70.200" lengthAdjust="spacingAndGlyphs">入力デバイス</text></svg>
<span class="t" style="left:666px;top:129.67px;font-size:12.5px;line-height:16px;color:#000;letter-spacing:0.252px;">- Packet View (2)</span>
<svg style="left:779px;top:131px;" width="12" height="12" viewBox="0 0 12 12"><path d="M2 2l7 7M9 2l-7 7" stroke="#000" stroke-width="2.200"/></svg>
<div style="left:268px;top:150px;width:1014px;height:1px;background:#8c8f94;"></div>
<div style="left:269px;top:151px;width:1013px;height:23px;background:linear-gradient(#fff 0%,#fff 45%,#f4f5f7 55%,#f1f2f5 100%);"></div>
<div style="left:269px;top:174px;width:1013px;height:1px;background:#d5d5d5;"></div>
<div style="left:328px;top:151px;width:1px;height:23px;background:linear-gradient(#f2f2f2,#dedfe1);"></div>
<div style="left:528px;top:151px;width:1px;height:23px;background:linear-gradient(#f2f2f2,#dedfe1);"></div>
<div style="left:588px;top:151px;width:1px;height:23px;background:linear-gradient(#f2f2f2,#dedfe1);"></div>
<div style="left:663px;top:151px;width:1px;height:23px;background:linear-gradient(#f2f2f2,#dedfe1);"></div>
<div style="left:1064px;top:151px;width:1px;height:23px;background:linear-gradient(#f2f2f2,#dedfe1);"></div>
<span class="t" style="left:275.5px;top:155.67px;font-size:12.5px;line-height:16px;color:#1e2a3a;letter-spacing:0.120px;">Packe...</span>
<span class="t" style="left:335.5px;top:155.67px;font-size:12.5px;line-height:16px;color:#1e2a3a;letter-spacing:0.574px;">Time</span>
<span class="t" style="left:535.5px;top:155.67px;font-size:12.5px;line-height:16px;color:#1e2a3a;letter-spacing:0.367px;">Direct...</span>
<span class="t" style="left:595.5px;top:155.67px;font-size:12.5px;line-height:16px;color:#1e2a3a;letter-spacing:0.413px;">Status</span>
<span class="t" style="left:670.5px;top:155.67px;font-size:12.5px;line-height:16px;color:#1e2a3a;letter-spacing:0.080px;">Function</span>
<span class="t" style="left:275.5px;top:178.67px;font-size:12.5px;line-height:16px;color:#000;letter-spacing:0.189px;">00000...</span>
<span class="t" style="left:335.5px;top:178.67px;font-size:12.5px;line-height:16px;color:#000;letter-spacing:0.226px;">13.04.2010 18:43:19.319</span>
<span class="t" style="left:535.5px;top:178.67px;font-size:12.5px;line-height:16px;color:#000;letter-spacing:0.135px;">UP</span>
<span class="t" style="left:670.5px;top:178.67px;font-size:12.5px;line-height:16px;color:#000;letter-spacing:0.039px;">PnP: Device Connected</span>
<span class="t" style="left:275.5px;top:200.67px;font-size:12.5px;line-height:16px;color:#000;letter-spacing:0.189px;">00000...</span>
<span class="t" style="left:335.5px;top:200.67px;font-size:12.5px;line-height:16px;color:#000;letter-spacing:0.346px;">13.04.2010 18:43:19.319 +0.0</span>
<span class="t" style="left:535.5px;top:200.67px;font-size:12.5px;line-height:16px;color:#000;letter-spacing:0.135px;">UP</span>
<span class="t" style="left:670.5px;top:200.67px;font-size:12.5px;line-height:16px;color:#000;letter-spacing:0.352px;">Internal: Pipe Info Transfer</span>
<div style="left:273px;top:220px;width:791px;height:22px;background:#dbeeed;"></div>
<span class="t" style="left:275.5px;top:222.67px;font-size:12.5px;line-height:16px;color:#000;letter-spacing:0.189px;">00000...</span>
<span class="t" style="left:335.5px;top:222.67px;font-size:12.5px;line-height:16px;color:#000;letter-spacing:0.375px;">13.04.2010 18:44:25.589 +66...</span>
<span class="t" style="left:535.5px;top:222.67px;font-size:12.5px;line-height:16px;color:#000;transform:scaleX(0.9728);transform-origin:0 0;">DOWN</span>
<span class="t" style="left:595.5px;top:222.67px;font-size:12.5px;line-height:16px;color:#000;letter-spacing:0.236px;">0x00000...</span>
<span class="t" style="left:670.5px;top:222.67px;font-size:12.5px;line-height:16px;color:#000;transform:scaleX(0.9635);transform-origin:0 0;">URB_FUNCTION_BULK_OR_INTERRUPT_TRANSFER</span>
<div style="left:273px;top:242px;width:791px;height:22px;background:#dbeeed;"></div>
<span class="t" style="left:275.5px;top:244.67px;font-size:12.5px;line-height:16px;color:#000;letter-spacing:0.189px;">00000...</span>
<span class="t" style="left:335.5px;top:244.67px;font-size:12.5px;line-height:16px;color:#000;letter-spacing:0.346px;">13.04.2010 18:44:25.589 +0.0</span>
<span class="t" style="left:535.5px;top:244.67px;font-size:12.5px;line-height:16px;color:#000;transform:scaleX(0.9728);transform-origin:0 0;">DOWN</span>
<span class="t" style="left:595.5px;top:244.67px;font-size:12.5px;line-height:16px;color:#000;letter-spacing:0.236px;">0x00000...</span>
<span class="t" style="left:670.5px;top:244.67px;font-size:12.5px;line-height:16px;color:#000;transform:scaleX(0.9635);transform-origin:0 0;">URB_FUNCTION_BULK_OR_INTERRUPT_TRANSFER</span>
<div style="left:273px;top:264px;width:791px;height:22px;background:#3399ff;"></div>
<span class="t" style="left:275.5px;top:266.67px;font-size:12.5px;line-height:16px;color:#fff;letter-spacing:0.189px;">00000...</span>
<span class="t" style="left:335.5px;top:266.67px;font-size:12.5px;line-height:16px;color:#fff;letter-spacing:0.392px;">13.04.2010 18:44:25.745 +0....</span>
<span class="t" style="left:535.5px;top:266.67px;font-size:12.5px;line-height:16px;color:#fff;letter-spacing:0.135px;">UP</span>
<span class="t" style="left:595.5px;top:266.67px;font-size:12.5px;line-height:16px;color:#fff;letter-spacing:0.236px;">0x00000...</span>
<span class="t" style="left:670.5px;top:266.67px;font-size:12.5px;line-height:16px;color:#fff;transform:scaleX(0.9635);transform-origin:0 0;">URB_FUNCTION_BULK_OR_INTERRUPT_TRANSFER</span>
<div style="left:273px;top:286px;width:791px;height:22px;background:#dbeeed;"></div>
<span class="t" style="left:275.5px;top:288.67px;font-size:12.5px;line-height:16px;color:#000;letter-spacing:0.189px;">00000...</span>
<span class="t" style="left:335.5px;top:288.67px;font-size:12.5px;line-height:16px;color:#000;letter-spacing:0.346px;">13.04.2010 18:44:25.745 +0.0</span>
<span class="t" style="left:535.5px;top:288.67px;font-size:12.5px;line-height:16px;color:#000;transform:scaleX(0.9728);transform-origin:0 0;">DOWN</span>
<span class="t" style="left:595.5px;top:288.67px;font-size:12.5px;line-height:16px;color:#000;letter-spacing:0.236px;">0x00000...</span>
<span class="t" style="left:670.5px;top:288.67px;font-size:12.5px;line-height:16px;color:#000;transform:scaleX(0.9635);transform-origin:0 0;">URB_FUNCTION_BULK_OR_INTERRUPT_TRANSFER</span>
<span class="t" style="left:275.5px;top:310.67px;font-size:12.5px;line-height:16px;color:#000;letter-spacing:0.189px;">00000...</span>
<span class="t" style="left:335.5px;top:310.67px;font-size:12.5px;line-height:16px;color:#000;letter-spacing:0.392px;">13.04.2010 18:44:25.792 +0....</span>
<span class="t" style="left:535.5px;top:310.67px;font-size:12.5px;line-height:16px;color:#000;letter-spacing:0.135px;">UP</span>
<span class="t" style="left:595.5px;top:310.67px;font-size:12.5px;line-height:16px;color:#000;letter-spacing:0.236px;">0x00000...</span>
<span class="t" style="left:670.5px;top:310.67px;font-size:12.5px;line-height:16px;color:#000;transform:scaleX(0.9635);transform-origin:0 0;">URB_FUNCTION_BULK_OR_INTERRUPT_TRANSFER</span>
<div style="left:273px;top:330px;width:791px;height:22px;background:#dbeeed;"></div>
<span class="t" style="left:275.5px;top:332.67px;font-size:12.5px;line-height:16px;color:#000;letter-spacing:0.189px;">00000...</span>
<span class="t" style="left:335.5px;top:332.67px;font-size:12.5px;line-height:16px;color:#000;letter-spacing:0.346px;">13.04.2010 18:44:25.792 +0.0</span>
<span class="t" style="left:535.5px;top:332.67px;font-size:12.5px;line-height:16px;color:#000;transform:scaleX(0.9728);transform-origin:0 0;">DOWN</span>
<span class="t" style="left:595.5px;top:332.67px;font-size:12.5px;line-height:16px;color:#000;letter-spacing:0.236px;">0x00000...</span>
<span class="t" style="left:670.5px;top:332.67px;font-size:12.5px;line-height:16px;color:#000;transform:scaleX(0.9635);transform-origin:0 0;">URB_FUNCTION_BULK_OR_INTERRUPT_TRANSFER</span>
<div style="left:268px;top:458px;width:1015px;height:1px;background:#8a8a8a;"></div>
<div style="left:268px;top:459px;width:1015px;height:25px;background:#f0f0f0;"></div>
<div style="left:268px;top:483px;width:1014px;height:2px;background:#6a6a6a;"></div>
<div style="left:268px;top:485px;width:1015px;height:241px;background:#fff;"></div>
<svg style="left:266px;top:464px;" width="70" height="22" viewBox="0 0 70 22"><path d="M2 21L6.800 4.500H60.200L65.500 21z" fill="#fff"/><path d="M2.300 20L6.800 4.500" stroke="#111" stroke-width="1.200" fill="none"/><path d="M6.800 4.500H60.200" stroke="#8a8a8a" stroke-width="1" fill="none"/><path d="M60.200 4.500L65.500 20.500" stroke="#111" stroke-width="1.300" fill="none"/></svg>
<span class="t" style="left:279.5px;top:469.04px;font-size:10px;line-height:13px;color:#000;letter-spacing:-0.185px;">Complete</span>
<span class="t" style="left:274.5px;top:488.52px;font-size:11.5px;line-height:15px;color:#000;letter-spacing:1.263px;font-weight:bold;-webkit-text-stroke:0.3px #000;">000004: Bulk or Interrupt Transfer (UP), 13.04.2010 18:44:25.745 +0.156. Status: 0x00000000</span>
<div style="left:349px;top:503px;width:213px;height:14px;background:#e8e8e8;border:1px dotted #222;box-sizing:border-box;"></div>
<svg style="left:556px;top:502px;" width="7" height="7" viewBox="0 0 7 7"><path d="M1 1h5.500v5.500z" fill="#e8112d"/></svg>
<span class="t" style="left:274.5px;top:501.52px;font-size:11.5px;line-height:15px;color:#000;letter-spacing:0.603px;">Pipe Handle: 0x79b9c38 (Endpoint Address: 0x83)</span>
<span class="t" style="left:274.5px;top:514.52px;font-size:11.5px;line-height:15px;color:#000;letter-spacing:0.710px;">Get 0xc bytes from the device</span>
<span class="t" style="left:282px;top:535.2px;font-size:10.5px;line-height:14px;color:#000;letter-spacing:0.661px;font-family:'Liberation Mono',monospace;">0B 08 00 00 00 00 00 00 00 00 00 00</span>
<span class="t" style="left:626px;top:535.2px;font-size:10.5px;line-height:14px;color:#000;letter-spacing:0.490px;font-family:'Liberation Mono',monospace;">............</span>
<div style="left:268px;top:726px;width:1015px;height:16px;background:#f0f0f0;"></div>
<div style="left:287px;top:727px;width:97px;height:14px;background:linear-gradient(#f5f5f5 0%,#e8e8e8 45%,#d6d6d6 55%,#cacaca 100%);border:1px solid #979797;box-sizing:border-box;border-radius:2px;"></div>
<svg style="left:268px;top:726px;" width="1015" height="16" viewBox="0 0 1015 16"><path d="M12 4.500l-4 3.500l4 3.500z" fill="#444"/><path d="M1003 4.500l4 3.500l-4 3.500z" fill="#444"/><path d="M65.500 5v6M67.500 5v6M69.500 5v6" stroke="#666" stroke-width="1"/></svg>
<div style="left:268px;top:742px;width:1015px;height:5px;background:#fff;"></div>
<div style="left:268px;top:747px;width:1015px;height:1px;background:#777;"></div>
<div style="left:268px;top:748px;width:1015px;height:28px;background:#f0f0f0;"></div>
<div style="left:268px;top:747px;width:80px;height:22px;background:#fff;border:1px solid #6b6b6b;border-top:none;border-radius:0 0 3px 3px;box-sizing:border-box;"></div>
<div style="left:269px;top:747px;width:78px;height:1px;background:#fff;"></div>
<span class="t" style="left:288px;top:750.67px;font-size:12.5px;line-height:16px;color:#000;letter-spacing:-0.065px;">URB View</span>
<span class="t" style="left:368.5px;top:750.67px;font-size:12.5px;line-height:16px;color:#7b7b7b;letter-spacing:0.272px;">HID View</span>
<span class="t" style="left:446.5px;top:750.67px;font-size:12.5px;line-height:16px;color:#7b7b7b;letter-spacing:0.145px;">Mass Storage View</span>
<span class="t" style="left:580.2px;top:750.67px;font-size:12.5px;line-height:16px;color:#7b7b7b;letter-spacing:0.404px;">Still Image/MTP Vi...</span>
<span class="t" style="left:729.5px;top:750.67px;font-size:12.5px;line-height:16px;color:#7b7b7b;letter-spacing:0.252px;">Communications View</span>
<div style="left:425px;top:750px;width:1px;height:18px;background:#6b6b6b;"></div>
<div style="left:559px;top:750px;width:1px;height:18px;background:#6b6b6b;"></div>
<div style="left:708px;top:750px;width:1px;height:18px;background:#6b6b6b;"></div>
<svg style="left:270px;top:750px;" width="17" height="17" viewBox="0 0 17 17"><rect x="0.500" y="0.500" width="13" height="15" fill="#ece8fc" stroke="#8478c8" stroke-width="1"/><path d="M0.500 4.500h13M0.500 8.500h13M0.500 12.500h13M5 4.500v11M9.500 4.500v11" stroke="#b4aaf0" stroke-width="1"/><rect x="1" y="1" width="12" height="3.300" fill="#c9c0f6"/><g stroke="#7c0e0a" stroke-width="0.500"><path d="M4.500 1.500l3-1.500l3 1.500v3.500l-3 1.500l-3-1.500z" fill="#e8a418"/><path d="M1.500 7l3-1.500l3 1.500v3.500l-3 1.500l-3-1.500z" fill="#d4201a"/><path d="M7.500 7l3-1.500l3 1.500v3.500l-3 1.500l-3-1.500z" fill="#d4201a"/></g><path d="M2.500 7.200l2-1M8.500 7.200l2-1" stroke="#f6928a" stroke-width="0.900"/><path d="M5.500 1.700l2-1" stroke="#fbe08a" stroke-width="0.900"/></svg>
<svg style="left:351px;top:750px;" width="17" height="17" viewBox="0 0 17 17"><rect x="0.500" y="0.500" width="13" height="15" fill="#ece8fc" stroke="#8478c8" stroke-width="1"/><path d="M0.500 4.500h13M0.500 8.500h13M0.500 12.500h13M5 4.500v11M9.500 4.500v11" stroke="#b4aaf0" stroke-width="1"/><rect x="1" y="1" width="12" height="3.300" fill="#c9c0f6"/><ellipse cx="9.500" cy="6.500" rx="5" ry="6.300" transform="rotate(35 9.500 6.500)" fill="#55565e" stroke="#8a1c1c" stroke-width="1.200"/><path d="M11.500 2.500l-2 3" stroke="#e8e8e8" stroke-width="1.400"/></svg>
<svg style="left:428px;top:750px;" width="17" height="17" viewBox="0 0 17 17"><rect x="0.500" y="0.500" width="13" height="15" fill="#ece8fc" stroke="#8478c8" stroke-width="1"/><path d="M0.500 4.500h13M0.500 8.500h13M0.500 12.500h13M5 4.500v11M9.500 4.500v11" stroke="#b4aaf0" stroke-width="1"/><rect x="1" y="1" width="12" height="3.300" fill="#c9c0f6"/><path d="M5 7.500l6-6.500l4.500 3l-6 7z" fill="#9cd42c" stroke="#5c9418" stroke-width="0.700"/><path d="M11.500 1.500l3 2" stroke="#e0e0e0" stroke-width="1.500"/></svg>
<svg style="left:562px;top:750px;" width="17" height="17" viewBox="0 0 17 17"><rect x="0.500" y="0.500" width="13" height="15" fill="#ece8fc" stroke="#8478c8" stroke-width="1"/><path d="M0.500 4.500h13M0.500 8.500h13M0.500 12.500h13M5 4.500v11M9.500 4.500v11" stroke="#b4aaf0" stroke-width="1"/><rect x="1" y="1" width="12" height="3.300" fill="#c9c0f6"/><path d="M2.500 3.500l9-2.500l4 2v6.500l-9 3l-4-2z" fill="#f09c1c" stroke="#a8640c" stroke-width="0.700"/><circle cx="12.300" cy="6" r="2.600" fill="#2c2c34" stroke="#888" stroke-width="0.800"/></svg>
<svg style="left:711px;top:750px;" width="17" height="17" viewBox="0 0 17 17"><rect x="0.500" y="0.500" width="13" height="15" fill="#ece8fc" stroke="#8478c8" stroke-width="1"/><path d="M0.500 4.500h13M0.500 8.500h13M0.500 12.500h13M5 4.500v11M9.500 4.500v11" stroke="#b4aaf0" stroke-width="1"/><rect x="1" y="1" width="12" height="3.300" fill="#c9c0f6"/><path d="M8 1h7v5.500l-3.500 3.500l-3.500-3.500z" fill="#f4f4f6" stroke="#44464e" stroke-width="1"/><path d="M9.500 6l4-4" stroke="#44464e" stroke-width="1.300"/></svg>
<div style="left:8px;top:776px;width:1277px;height:6px;background:#dfe3f3;"></div>
<div style="left:8px;top:782px;width:1277px;height:22px;background:#bfcddb;"></div>
<span class="t" style="left:11px;top:783.67px;font-size:12.5px;line-height:16px;color:#4a5462;letter-spacing:0.311px;">HID Descriptor</span>
<svg style="left:1245px;top:784px;" width="36" height="16" viewBox="0 0 36 16"><path d="M4.500 3.500h6M5.500 3.500v6.500M9.500 3.500v6.500M8.500 3.500v6.500M2.500 10.500h10M7.500 10.500v5" stroke="#222" stroke-width="1" fill="none"/><path d="M25 4l7 7M32 4l-7 7" stroke="#222" stroke-width="2" fill="none"/></svg>
<div style="left:8px;top:803px;width:1277px;height:1px;background:#93a0b1;"></div>
<div style="left:8px;top:804px;width:1277px;height:109px;background:#fff;"></div>
<div style="left:8px;top:804px;width:1px;height:109px;background:#7d838c;"></div>
<div style="left:1267px;top:805px;width:17px;height:107px;background:#f0f0f0;"></div>
<div style="left:1268px;top:822px;width:15px;height:17px;background:linear-gradient(90deg,#f4f4f4 0%,#e6e6e6 45%,#d2d2d2 55%,#c4c4c4 100%);border:1px solid #979797;box-sizing:border-box;border-radius:2px;"></div>
<svg style="left:1267px;top:805px;" width="17" height="107" viewBox="0 0 17 107"><path d="M5 10.500l3.500-4l3.500 4z" fill="#505050"/><path d="M5 95l3.500 4l3.500-4z" fill="#505050"/></svg>
<span class="t" style="left:11px;top:806.19px;font-size:11px;line-height:14px;color:#000;letter-spacing:0.341px;font-weight:bold;-webkit-text-stroke:0.25px #000;">This device is part of a composite device.</span>
<span class="t" style="left:11px;top:832.19px;font-size:11px;line-height:14px;color:#000;letter-spacing:0.422px;font-weight:bold;text-decoration:underline;-webkit-text-stroke:0.25px #000;">HID Descriptor</span>
<span class="t" style="left:11px;top:845.19px;font-size:11px;line-height:14px;color:#000;transform:scaleX(0.9513);transform-origin:0 0;">Usage Page:</span>
<span class="t" style="left:75px;top:845.19px;font-size:11px;line-height:14px;color:#000;letter-spacing:0.382px;font-weight:bold;-webkit-text-stroke:0.25px #000;">1 (Generic Desktop Controls)</span>
<span class="t" style="left:11px;top:858.19px;font-size:11px;line-height:14px;color:#000;transform:scaleX(0.9612);transform-origin:0 0;">Usage:</span>
<span class="t" style="left:48px;top:858.19px;font-size:11px;line-height:14px;color:#000;letter-spacing:0.597px;font-weight:bold;-webkit-text-stroke:0.25px #000;">6 (Keyboard)</span>
<span class="t" style="left:11px;top:871.19px;font-size:11px;line-height:14px;color:#000;transform:scaleX(0.9358);transform-origin:0 0;">Collection</span>
<span class="t" style="left:43.8px;top:884.19px;font-size:11px;line-height:14px;color:#000;transform:scaleX(0.9513);transform-origin:0 0;">Usage Page:</span>
<span class="t" style="left:108.2px;top:884.19px;font-size:11px;line-height:14px;color:#000;letter-spacing:0.097px;font-weight:bold;-webkit-text-stroke:0.25px #000;">8 (LEDs)</span>
<span class="t" style="left:43.8px;top:897.19px;font-size:11px;line-height:14px;color:#000;letter-spacing:-0.094px;">Usages (1-3):</span>
<span class="t" style="left:113px;top:897.19px;font-size:11px;line-height:14px;color:#000;letter-spacing:0.041px;font-weight:bold;-webkit-text-stroke:0.25px #000;">NumLock, CapsLock, Scroll Lock</span>
<div style="left:8px;top:912px;width:1277px;height:1px;background:#9a9a9a;"></div>
<div style="left:8px;top:913px;width:1277px;height:3px;background:#fff;"></div>
<div style="left:8px;top:916px;width:1277px;height:1px;background:#6f6f6f;"></div>
<div style="left:8px;top:917px;width:1277px;height:28px;background:linear-gradient(#d5daee 0px,#d5daee 12px,#e4e8f6 100%);"></div>
<div style="left:433px;top:916px;width:110px;height:22px;background:#fff;border:1px solid #6b6b6b;border-top:none;border-radius:0 0 3px 3px;box-sizing:border-box;"></div>
<div style="left:434px;top:916px;width:108px;height:1px;background:#fff;"></div>
<span class="t" style="left:29px;top:919.67px;font-size:12.5px;line-height:16px;color:#767981;letter-spacing:0.119px;">Dependent Devices</span>
<span class="t" style="left:164px;top:919.67px;font-size:12.5px;line-height:16px;color:#767981;letter-spacing:0.241px;">Device Descriptor</span>
<span class="t" style="left:290px;top:919.67px;font-size:12.5px;line-height:16px;color:#767981;letter-spacing:0.249px;">Configuration Descriptor</span>
<span class="t" style="left:454px;top:919.67px;font-size:12.5px;line-height:16px;color:#000;letter-spacing:0.349px;">HID Descriptor</span>
<div style="left:143px;top:919px;width:1px;height:18px;background:#6b6b6b;"></div>
<div style="left:269px;top:919px;width:1px;height:18px;background:#6b6b6b;"></div>
<svg style="left:11px;top:920px;" width="17" height="17" viewBox="0 0 17 17"><path d="M0.500 2h8l-1 9l-3 4l-3-4z" fill="#3c7ed8" stroke="#1f4f9c" stroke-width="0.700"/><path d="M2 3.500h5" stroke="#a8ccf8" stroke-width="1.500"/><rect x="8.500" y="5" width="6" height="10.500" fill="#d42a1c" stroke="#8c140c" stroke-width="0.700"/><path d="M10 7h3M10 9.500h3M10 12h3" stroke="#fff" stroke-width="1"/></svg>
<svg style="left:146px;top:920px;" width="17" height="17" viewBox="0 0 17 17"><rect x="0.500" y="1.500" width="15" height="13.500" fill="#fcfcfe" stroke="#8c86b8" stroke-width="1"/><rect x="1" y="2" width="14" height="3.300" fill="#c4e04c"/><path d="M2 7.500h1.500M2 9.500h1.500M2 11.500h1.500M2 13.500h1.500" stroke="#9a90d8" stroke-width="1"/><path d="M4.500 7.500h9.500M4.500 9.500h9.500M4.500 11.500h9.500M4.500 13.500h9.500" stroke="#e4e0f4" stroke-width="1"/></svg>
<svg style="left:272px;top:920px;" width="17" height="17" viewBox="0 0 17 17"><rect x="0.500" y="1.500" width="15" height="13.500" fill="#fcfcfe" stroke="#8c86b8" stroke-width="1"/><rect x="1" y="2" width="14" height="3.300" fill="#c4e04c"/><path d="M2 7.500h1.500M2 9.500h1.500M2 11.500h1.500M2 13.500h1.500" stroke="#9a90d8" stroke-width="1"/><path d="M4.500 7.500h9.500M4.500 9.500h9.500M4.500 11.500h9.500M4.500 13.500h9.500" stroke="#e4e0f4" stroke-width="1"/></svg>
<svg style="left:437px;top:920px;" width="17" height="17" viewBox="0 0 17 17"><rect x="0.500" y="1.500" width="15" height="13.500" fill="#fcfcfe" stroke="#8c86b8" stroke-width="1"/><rect x="1" y="2" width="14" height="3.300" fill="#c4e04c"/><path d="M2 7.500h1.500M2 9.500h1.500M2 11.500h1.500M2 13.500h1.500" stroke="#9a90d8" stroke-width="1"/><path d="M4.500 7.500h9.500M4.500 9.500h9.500M4.500 11.500h9.500M4.500 13.500h9.500" stroke="#e4e0f4" stroke-width="1"/></svg>
<div style="left:8px;top:945px;width:1277px;height:1px;background:#6f6f6f;"></div>
<div style="left:8px;top:946px;width:1277px;height:23px;background:#f0eeee;border:1px solid #fff;border-right:none;box-sizing:border-box;"></div>
<span class="t" style="left:10.5px;top:949.67px;font-size:12.5px;line-height:16px;color:#000;transform:scaleX(0.9686);transform-origin:0 0;">Ready</span>
<span class="t" style="left:1046px;top:949.67px;font-size:12.5px;line-height:16px;color:#000;letter-spacing:0.164px;">Recording is ready</span>
<span class="t" style="left:1190.5px;top:949.67px;font-size:12.5px;line-height:16px;color:#000;letter-spacing:0.234px;">Playing: 0</span>
<div style="left:779px;top:947px;width:1px;height:21px;background:#d9d6d6;"></div>
<div style="left:780px;top:947px;width:1px;height:21px;background:#fbfafa;"></div>
<div style="left:931px;top:947px;width:1px;height:21px;background:#d9d6d6;"></div>
<div style="left:932px;top:947px;width:1px;height:21px;background:#fbfafa;"></div>
<div style="left:993px;top:947px;width:1px;height:21px;background:#d9d6d6;"></div>
<div style="left:994px;top:947px;width:1px;height:21px;background:#fbfafa;"></div>
<div style="left:1041px;top:947px;width:1px;height:21px;background:#d9d6d6;"></div>
<div style="left:1042px;top:947px;width:1px;height:21px;background:#fbfafa;"></div>
<div style="left:1185px;top:947px;width:1px;height:21px;background:#d9d6d6;"></div>
<div style="left:1186px;top:947px;width:1px;height:21px;background:#fbfafa;"></div>
<div style="left:1265px;top:947px;width:1px;height:21px;background:#d9d6d6;"></div>
<div style="left:1266px;top:947px;width:1px;height:21px;background:#fbfafa;"></div>
<svg style="left:1271px;top:955px;" width="13" height="13" viewBox="0 0 13 13"><rect x="9" y="1" width="2" height="2" fill="#b8b5b5"/><rect x="5" y="5" width="2" height="2" fill="#b8b5b5"/><rect x="9" y="5" width="2" height="2" fill="#b8b5b5"/><rect x="1" y="9" width="2" height="2" fill="#b8b5b5"/><rect x="5" y="9" width="2" height="2" fill="#b8b5b5"/><rect x="9" y="9" width="2" height="2" fill="#b8b5b5"/></svg>
</body></html>
